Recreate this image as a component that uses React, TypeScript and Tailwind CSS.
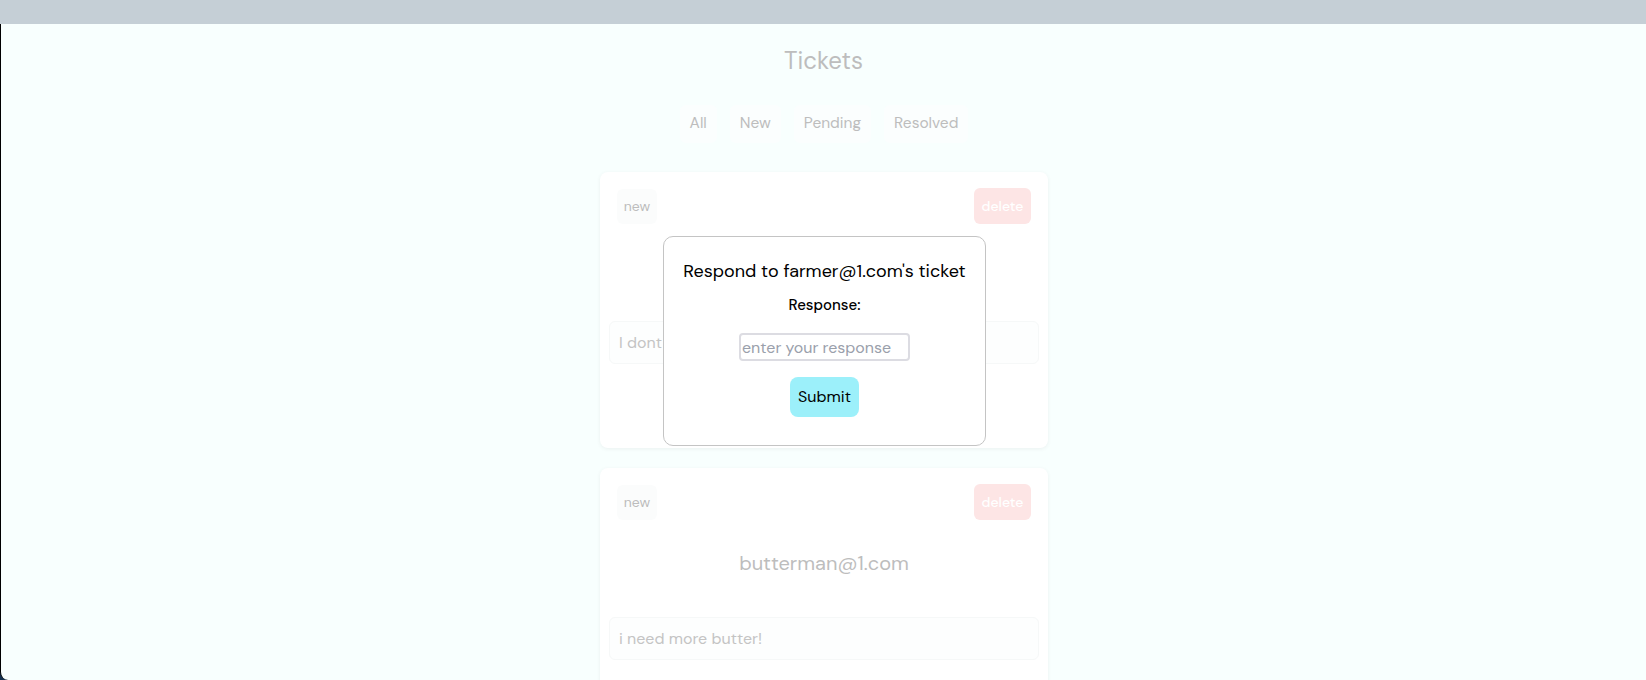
import React from "react";

const font = { fontFamily: '"DM Sans", Inter, "Noto Sans", sans-serif' };

function TicketCard({ email, message }: { email: string; message: string }) {
  return (
    <div className="w-[448px] bg-white rounded-lg shadow-[0_1px_4px_rgba(0,0,0,0.06)] px-[17px] pt-4 pb-[84px] flex flex-col">
      <div className="flex items-center justify-between">
        <span className="h-[35px] w-[40px] flex items-center justify-center rounded-md bg-[#fbfcfc] text-[14px] text-[#bdbdbd]">new</span>
        <button className="h-[36px] w-[57px] flex items-center justify-center rounded-md bg-[#fde5e5] text-[14px] font-medium text-white">delete</button>
      </div>
      <div className="h-[97px] pb-[11px] flex items-center justify-center text-[20px] text-[#bdbdbd]">{email}</div>
      <div className="-mx-2 h-[43px] flex items-center px-[9px] rounded-md border border-[#f6f8f8] bg-[#fdfefe] text-[16px] text-[#c4c4c4]">{message}</div>
    </div>
  );
}

export default function App() {
  return (
    <div className="w-[1646px] h-[680px] overflow-hidden bg-[#13304f]" style={font}>
      <div className="h-full flex flex-col bg-[#f8fffe] rounded-bl-[8px] border-l border-black relative">
        <div className="h-[24px] shrink-0 bg-[#c5cfd6] -ml-px" />
        <div className="flex flex-col items-center">
          <h1 className="mt-[21px] text-[24px] leading-[32px] text-[#bdbdbd]">Tickets</h1>
          <div className="mt-[28px] flex gap-[13px] text-[15.5px] text-[#bdbdbd] ml-[1px]">
            <button className="h-[38px] px-[10px] rounded-md bg-[#fbfefe]">All</button>
            <button className="h-[38px] px-[10px] rounded-md bg-[#fbfefe]">New</button>
            <button className="h-[38px] px-[10px] rounded-md bg-[#fbfefe]">Pending</button>
            <button className="h-[38px] px-[10px] rounded-md bg-[#fbfefe]">Resolved</button>
          </div>
          <div className="mt-[29px] flex flex-col gap-[20px] ml-[1px]">
            <TicketCard email="farmer@1.com" message="I dont like the crops" />
            <TicketCard email="butterman@1.com" message="i need more butter!" />
          </div>
        </div>
        <div className="absolute left-[662px] top-[236px] w-[323px] h-[210px] bg-white border border-[#c4c4c4] rounded-[10px] flex flex-col items-center">
          <h2 className="mt-[22px] text-[18px] leading-[24px] text-black">Respond to farmer@1.com's ticket</h2>
          <label className="mt-[12px] text-[15px] leading-[20px] text-black font-medium">Response:</label>
          <input
            className="mt-[18px] w-[171px] h-[28px] border-2 border-[#dcdce2] rounded-[4px] px-[1px] text-[16px] placeholder:text-[#9aa0ab] outline-none"
            placeholder="enter your response"
          />
          <button className="mt-[16px] w-[69px] h-[40px] rounded-lg bg-[#9cf0fa] text-[16px] text-black">Submit</button>
        </div>
      </div>
    </div>
  );
}
